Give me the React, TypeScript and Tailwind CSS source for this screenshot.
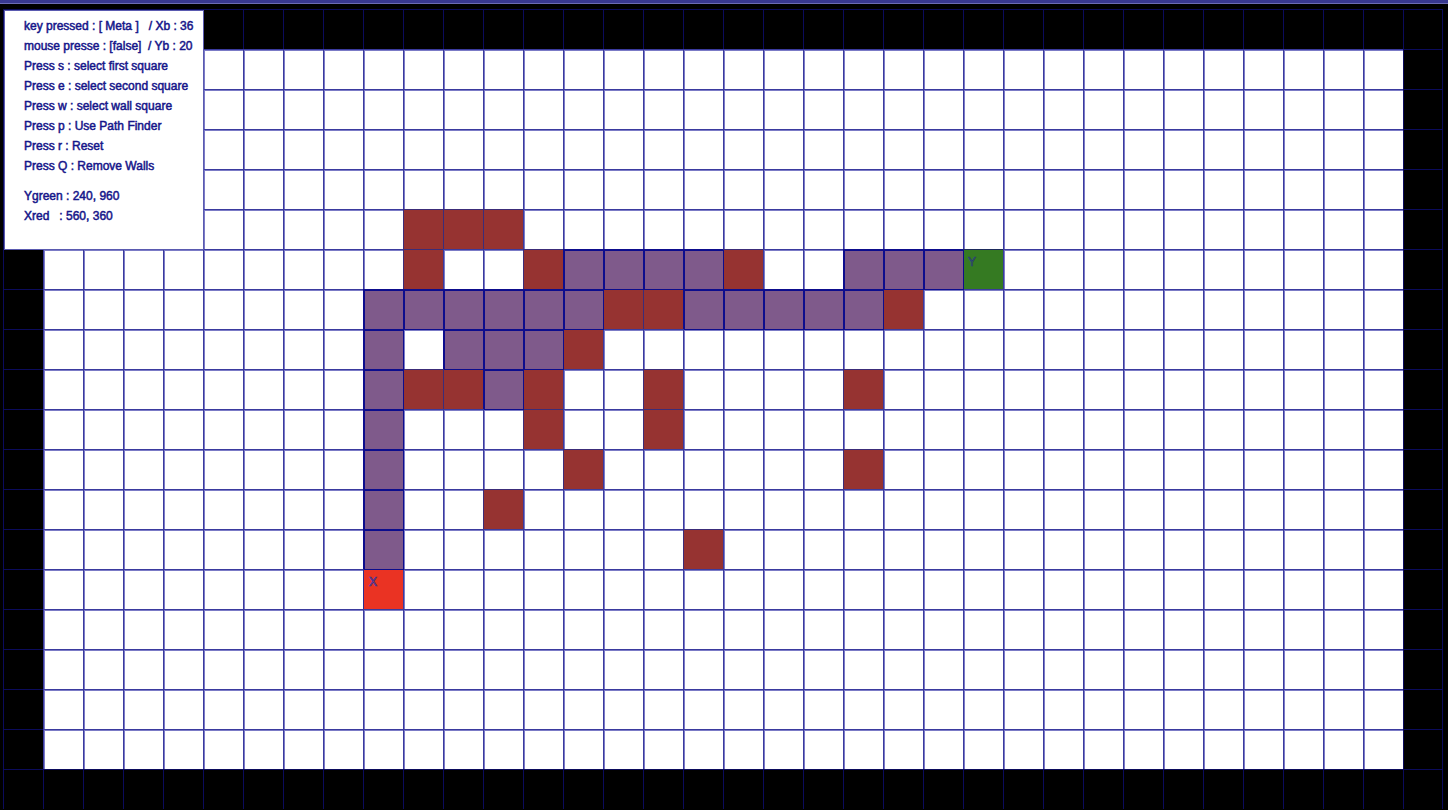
import React from "react";

const COLS = 36;
const ROWS = 20;

// walls, path and endpoints as [row, col]
const walls: Record<number, number[]> = {
  5: [10, 11, 12],
  6: [10, 13, 18],
  7: [15, 16, 22],
  8: [14],
  9: [10, 11, 13, 16, 21],
  10: [13, 16],
  11: [14, 21],
  12: [12],
  13: [17],
};

const path: Record<number, number[]> = {
  6: [14, 15, 16, 17, 21, 22, 23],
  7: [9, 10, 11, 12, 13, 14, 17, 18, 19, 20, 21],
  8: [9, 11, 12, 13],
  9: [9, 12],
  10: [9],
  11: [9],
  12: [9],
  13: [9],
};

type Kind = "edge" | "empty" | "wall" | "path" | "start" | "end";

function kindOf(r: number, c: number): Kind {
  if (r === 0 || r === ROWS - 1 || c === 0 || c === COLS - 1) return "edge";
  if (r === 14 && c === 9) return "start";
  if (r === 6 && c === 24) return "end";
  if (walls[r]?.includes(c)) return "wall";
  if (path[r]?.includes(c)) return "path";
  return "empty";
}

const cellClass: Record<Kind, string> = {
  edge: "bg-black border-l border-t border-[#0b0b5c]",
  empty: "bg-white border-l border-t border-[#3a3a9e] shadow-[inset_1px_1px_0_#7b7bc6]",
  wall: "bg-[#963331] border-l border-t border-[#3c2c78]",
  path: "relative z-[1] bg-[#7f5a8b] border-l-2 border-t-2 border-[#0d0d8d] shadow-[1px_1px_0_#0d0d8d]",
  start: "bg-[#ea3323] border-l border-t border-[#2c2c90]",
  end: "bg-[#357a22] border-l border-t border-[#1d2a5c]",
};

const lines = [
  "key pressed : [ Meta ]   / Xb : 36",
  "mouse presse : [false]  / Yb : 20",
  "Press s : select first square",
  "Press e : select second square",
  "Press w : select wall square",
  "Press p : Use Path Finder",
  "Press r : Reset",
  "Press Q : Remove Walls",
];

function Cell({ r, c }: { r: number; c: number }) {
  const kind = kindOf(r, c);
  const last = c === COLS - 1 ? " border-r" : "";
  return (
    <div className={`${cellClass[kind]}${last}`}>
      {kind === "start" && (
        <span className="block pl-[5px] pt-[5px] text-[12px] leading-[14px] text-transparent [-webkit-text-stroke:0.7px_#3535a0] font-['Liberation_Sans',sans-serif]">
          X
        </span>
      )}
      {kind === "end" && (
        <span className="block pl-[4px] pt-[5px] text-[12px] leading-[14px] text-transparent [-webkit-text-stroke:0.7px_#2a3a7a] font-['Liberation_Sans',sans-serif]">
          Y
        </span>
      )}
    </div>
  );
}

export default function App() {
  return (
    <div className="relative w-[1448px] h-[810px] overflow-hidden bg-black">
      {/* window strip */}
      <div className="h-[3px] bg-[#383890]" />
      <div className="h-[1px] bg-[#6c6cb4]" />
      <div className="h-[5px] bg-black" />

      {/* board */}
      <div className="pl-[3px]">
        <div className="grid grid-cols-[repeat(36,40px)] grid-rows-[repeat(20,40px)]">
          {Array.from({ length: ROWS }).map((_, r) =>
            Array.from({ length: COLS }).map((_, c) => <Cell key={`${r}-${c}`} r={r} c={c} />)
          )}
        </div>
      </div>

      {/* info panel */}
      <div className="absolute left-[4px] top-[10px] z-10 w-[200px] h-[240px] bg-white border border-[#5a5ab0] pl-[19px] pt-[5px] text-[12px] leading-[20px] font-normal text-[#16168a] [-webkit-text-stroke:0.5px_#16168a] font-['Liberation_Sans',Arial,sans-serif]">
        {lines.map((l) => (
          <div key={l} className="whitespace-pre">
            {l}
          </div>
        ))}
        <div className="mt-[10px] whitespace-pre">Ygreen : 240, 960</div>
        <div className="whitespace-pre">Xred   : 560, 360</div>
      </div>
    </div>
  );
}
